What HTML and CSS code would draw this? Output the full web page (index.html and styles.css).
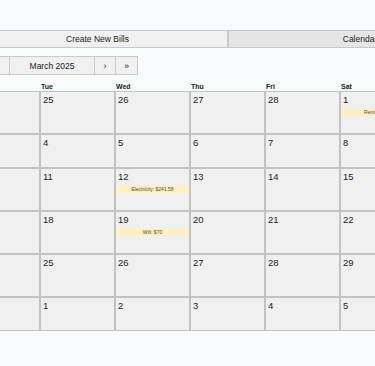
FILE: index.html
```html
<!DOCTYPE html>
<html lang="en">
<head>
  <meta charset="UTF-8" />
  <meta name="viewport" content="width=device-width, initial-scale=1.0"/>
  <title>Bills Calendar</title>
  <link rel="stylesheet" href="styles.css">
</head>
<body>
  <div class="toolbar">
    <div class="tabs">
      <button class="tab">Create New Bills</button>
      <button class="tab active">Calendar</button>
    </div>

    <div class="month-nav">
      <button class="nav-btn">&laquo;</button>
      <button class="nav-btn">&lsaquo;</button>
      <button class="nav-btn month">March 2025</button>
      <button class="nav-btn">&rsaquo;</button>
      <button class="nav-btn wide">&raquo;</button>
    </div>
  </div>

  <div class="calendar">
    <div class="weekdays">
      <div>Sun</div><div>Mon</div><div>Tue</div><div>Wed</div><div>Thu</div><div>Fri</div><div>Sat</div>
    </div>

    <div class="days">
      <div class="day"><span class="num">23</span></div>
      <div class="day"><span class="num">24</span></div>
      <div class="day"><span class="num">25</span></div>
      <div class="day"><span class="num">26</span></div>
      <div class="day"><span class="num">27</span></div>
      <div class="day"><span class="num">28</span></div>
      <div class="day"><span class="num">1</span><div class="bill">Rent: $1200</div></div>

      <div class="day"><span class="num">2</span></div>
      <div class="day"><span class="num">3</span></div>
      <div class="day"><span class="num">4</span></div>
      <div class="day"><span class="num">5</span></div>
      <div class="day"><span class="num">6</span></div>
      <div class="day"><span class="num">7</span></div>
      <div class="day"><span class="num">8</span></div>

      <div class="day"><span class="num">9</span></div>
      <div class="day"><span class="num">10</span></div>
      <div class="day"><span class="num">11</span></div>
      <div class="day"><span class="num">12</span><div class="bill">Electricity: $241.58</div></div>
      <div class="day"><span class="num">13</span></div>
      <div class="day"><span class="num">14</span></div>
      <div class="day"><span class="num">15</span></div>

      <div class="day"><span class="num">16</span></div>
      <div class="day"><span class="num">17</span></div>
      <div class="day"><span class="num">18</span></div>
      <div class="day"><span class="num">19</span><div class="bill">Wifi: $70</div></div>
      <div class="day"><span class="num">20</span></div>
      <div class="day"><span class="num">21</span></div>
      <div class="day"><span class="num">22</span></div>

      <div class="day"><span class="num">23</span><div class="bill">Phone: $45</div></div>
      <div class="day"><span class="num">24</span></div>
      <div class="day"><span class="num">25</span></div>
      <div class="day"><span class="num">26</span></div>
      <div class="day"><span class="num">27</span></div>
      <div class="day"><span class="num">28</span></div>
      <div class="day"><span class="num">29</span></div>

      <div class="day"><span class="num">30</span></div>
      <div class="day"><span class="num">31</span></div>
      <div class="day"><span class="num">1</span></div>
      <div class="day"><span class="num">2</span></div>
      <div class="day"><span class="num">3</span></div>
      <div class="day"><span class="num">4</span></div>
      <div class="day"><span class="num">5</span></div>
    </div>
  </div>
</body>
</html>
```

FILE: styles.css
```css
html, body {
  overflow: hidden;
}

body {
  margin: 0;
  padding-top: 30px;
  font-family: 'Liberation Sans', Arial, sans-serif;
  background: #f6fcfc;
  color: #222;
}

button {
  font-family: inherit;
  color: #222;
  cursor: pointer;
}

.toolbar {
  margin-left: -33px;
}

.tabs {
  display: flex;
}

.tab {
  box-sizing: border-box;
  width: 261px;
  height: 18px;
  padding: 0;
  flex-shrink: 0;
  border: 1px solid #c8c8c8;
  background: #f0f0f0;
  font-size: 8.5px;
}

.tab + .tab {
  width: 264px;
}

.tab.active {
  background: #e5e5e5;
}

.month-nav {
  display: flex;
  margin-top: 8px;
}

.nav-btn {
  box-sizing: border-box;
  width: 22px;
  height: 19px;
  padding: 0;
  border: 1px solid #cacaca;
  background: #f0f0f0;
  font-size: 8.5px;
}

.nav-btn + .nav-btn {
  margin-left: -1px;
}

.nav-btn.month {
  width: 86px;
}

.nav-btn.wide {
  width: 23px;
}

.calendar {
  margin-left: -110px;
  width: 525px;
}

.weekdays {
  display: grid;
  grid-template-columns: repeat(7, 75px);
  padding-top: 7px;
  font-size: 7px;
  font-weight: bold;
  line-height: 9px;
}

.weekdays div {
  padding-left: 1px;
}

.days {
  display: grid;
  grid-template-columns: repeat(7, 75px);
}

.day {
  box-sizing: border-box;
  min-height: 34px;
  padding: 2px 0 17px;
  border: 1px solid #c2c2c2;
  background: #f0f0f0;
}

.num {
  display: block;
  padding-left: 2px;
  font-size: 9.5px;
  line-height: 11px;
}

.bill {
  margin-top: 3px;
  height: 8px;
  background: #fdefc6;
  color: #5b4c2e;
  font-size: 5px;
  line-height: 8px;
  text-align: center;
  white-space: nowrap;
  overflow: hidden;
}
```
